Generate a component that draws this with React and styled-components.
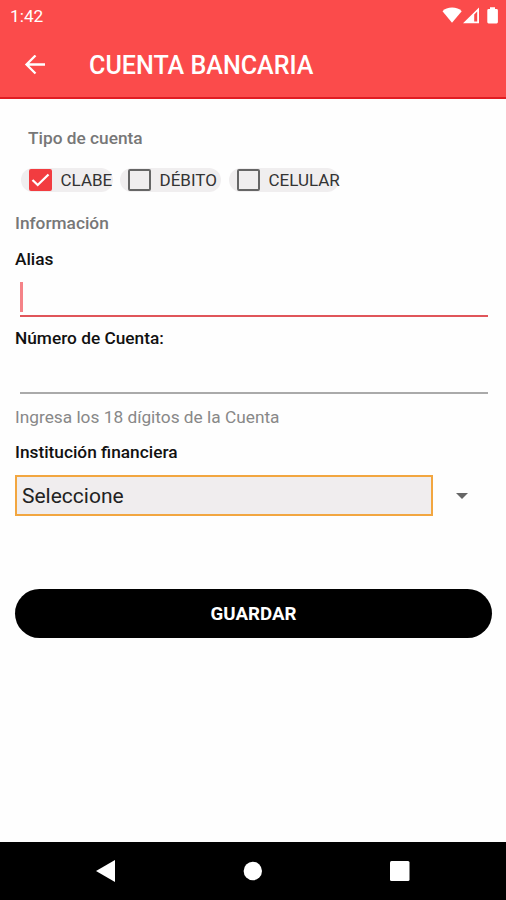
import React from 'react';
import styled, { createGlobalStyle } from 'styled-components';

const accountTypes = [
  { name: 'CLABE', checked: true, width: 92, gap: 7 },
  { name: 'DÉBITO', checked: false, width: 101, gap: 8 },
  { name: 'CELULAR', checked: false, width: 110, gap: 0 },
];

const GlobalStyle = createGlobalStyle`
  * {
    box-sizing: border-box;
  }

  body {
    margin: 0;
    background: #fff;
    font-family: Roboto, 'Liberation Sans', sans-serif;
  }
`;

const Screen = styled.div`
  display: flex;
  flex-direction: column;
  width: 506px;
  height: 900px;
  overflow: hidden;
  background: #fefefe;
`;

const Header = styled.header`
  height: 99px;
  border-bottom: 2px solid #e01c22;
  background: #fb4b4b;
  color: #fff;
`;

const StatusBar = styled.div`
  display: flex;
  align-items: center;
  justify-content: space-between;
  height: 32px;
  padding: 0 8px 0 10px;
  font-size: 17.3px;
`;

const Toolbar = styled.div`
  display: flex;
  align-items: center;
  height: 66px;
  padding-left: 24px;
`;

const BackIcon = styled.svg`
  width: 22px;
  height: 20px;
  margin-right: 43px;
`;

const Title = styled.h1`
  margin: 2px 0 0;
  font-size: 25.1px;
  font-weight: 500;
  line-height: 30px;
`;

const Form = styled.main`
  flex: 1;
  padding: 27px 14px 0 15px;
`;

const Text = styled.div`
  height: 24px;
  margin-top: ${props => props.$top || 0}px;
  color: ${props => props.$color || '#111'};
  font-size: 17.3px;
  font-weight: ${props => props.$weight || 500};
  line-height: 24px;
  white-space: nowrap;
`;

const OptionName = styled.span`
  color: #333;
  font-size: 17px;
  line-height: 24px;
`;

const Types = styled.div`
  margin-left: 13px;
`;

const Options = styled.div`
  display: flex;
  margin: 18px 0 19px -7px;
`;

const Option = styled.div`
  display: flex;
  flex: none;
  align-items: center;
  width: ${props => props.$width}px;
  height: 24px;
  margin-right: ${props => props.$gap}px;
  padding-left: 8px;
  border-radius: 12px;
  background: #f0eeef;
`;

const Box = styled.span`
  display: flex;
  flex: none;
  align-items: center;
  justify-content: center;
  width: 23px;
  height: 22px;
  margin-right: 8.5px;
  border: 2px solid ${props => (props.$checked ? '#f23c40' : '#666')};
  border-radius: 2px;
  background: ${props => (props.$checked ? '#f23c40' : 'transparent')};
`;

const Input = styled.div`
  height: ${props => props.$height}px;
  margin: 0 4px 0 5px;
  padding-top: 11px;
  border-bottom: 2px solid ${props => (props.$focused ? '#e0555a' : '#aaa')};
`;

const Caret = styled.div`
  width: 3px;
  height: 30px;
  background: #f58388;
`;

const SelectRow = styled.div`
  display: flex;
  align-items: center;
  margin-top: 11px;
`;

const Select = styled.div`
  width: 418px;
  height: 41px;
  margin-right: 23px;
  padding-left: 5px;
  border: 2px solid #f2a640;
  background: #f0edee;
  color: #222;
  font-size: 21px;
  line-height: 39px;
`;

const Button = styled.button`
  display: block;
  width: 477px;
  height: 49px;
  margin: 73px 0 0;
  padding: 1px 0 0;
  border: 0;
  border-radius: 25px;
  background: #000;
  color: #fff;
  font-family: inherit;
  font-size: 18.7px;
  font-weight: 700;
`;

const NavBar = styled.nav`
  display: flex;
  align-items: center;
  justify-content: space-between;
  height: 58px;
  padding: 0 96px;
  background: #000;
`;

const App = () => (
  <Screen>
    <GlobalStyle />

    <Header>
      <StatusBar>
        <span>1:42</span>
        <svg width="56" height="18" viewBox="442 7 56 18" fill="#fff">
          <path d="M442.5 11.3C446.5 6.3 457.7 6.3 461.7 11.3L452 22.8Z" />
          <path fillRule="evenodd" d="M463 23.3L479 7.6V23.3ZM474.2 14.5V21.5H477.2V11.5Z" />
          <path d="M490 7.3h5v1.8h1.6q1.3 0 1.3 1.3v11.7q0 1.3-1.3 1.3h-8q-1.3 0-1.3-1.3V10.4q0-1.3 1.3-1.3H490Z" />
        </svg>
      </StatusBar>

      <Toolbar>
        <BackIcon viewBox="0 0 22 20" fill="none" stroke="#fff" strokeWidth="2.3">
          <path d="M21 9.5H3M11.5 0.5L2.5 9.5L11.5 18.5" />
        </BackIcon>
        <Title>CUENTA BANCARIA</Title>
      </Toolbar>
    </Header>

    <Form>
      <Types>
        <Text $color="#777">Tipo de cuenta</Text>
        <Options>
          {accountTypes.map(type => (
            <Option key={type.name} $width={type.width} $gap={type.gap}>
              <Box $checked={type.checked}>
                {type.checked && (
                  <svg width="19" height="18" viewBox="0 0 19 18" fill="none" stroke="#fff" strokeWidth="2.3">
                    <path d="M1.5 9L6.7 14L17.5 3.5" />
                  </svg>
                )}
              </Box>
              <OptionName>{type.name}</OptionName>
            </Option>
          ))}
        </Options>
      </Types>

      <Text $color="#777">Información</Text>
      <Text $top={12}>Alias</Text>
      <Input $height={46} $focused><Caret /></Input>
      <Text $top={9}>Número de Cuenta:</Text>
      <Input $height={44} />
      <Text $weight={400} $color="#888" $top={11}>
        Ingresa los 18 dígitos de la Cuenta
      </Text>
      <Text $top={11}>Institución financiera</Text>

      <SelectRow>
        <Select>Seleccione</Select>
        <svg width="12" height="6" viewBox="0 0 12 6" fill="#666">
          <path d="M0 0H12L6 6Z" />
        </svg>
      </SelectRow>

      <Button>GUARDAR</Button>
    </Form>

    <NavBar>
      <svg width="19" height="22" viewBox="0 0 19 22" fill="#fff">
        <path d="M0 11L19 0V22Z" />
      </svg>
      <svg width="19" height="20" viewBox="0 0 19 20" fill="#fff">
        <circle cx="9.8" cy="10" r="9.2" />
      </svg>
      <svg width="20" height="20" viewBox="0 0 20 20" fill="#fff">
        <rect width="19.5" height="20" rx="1.5" />
      </svg>
    </NavBar>
  </Screen>
);

export default App;
